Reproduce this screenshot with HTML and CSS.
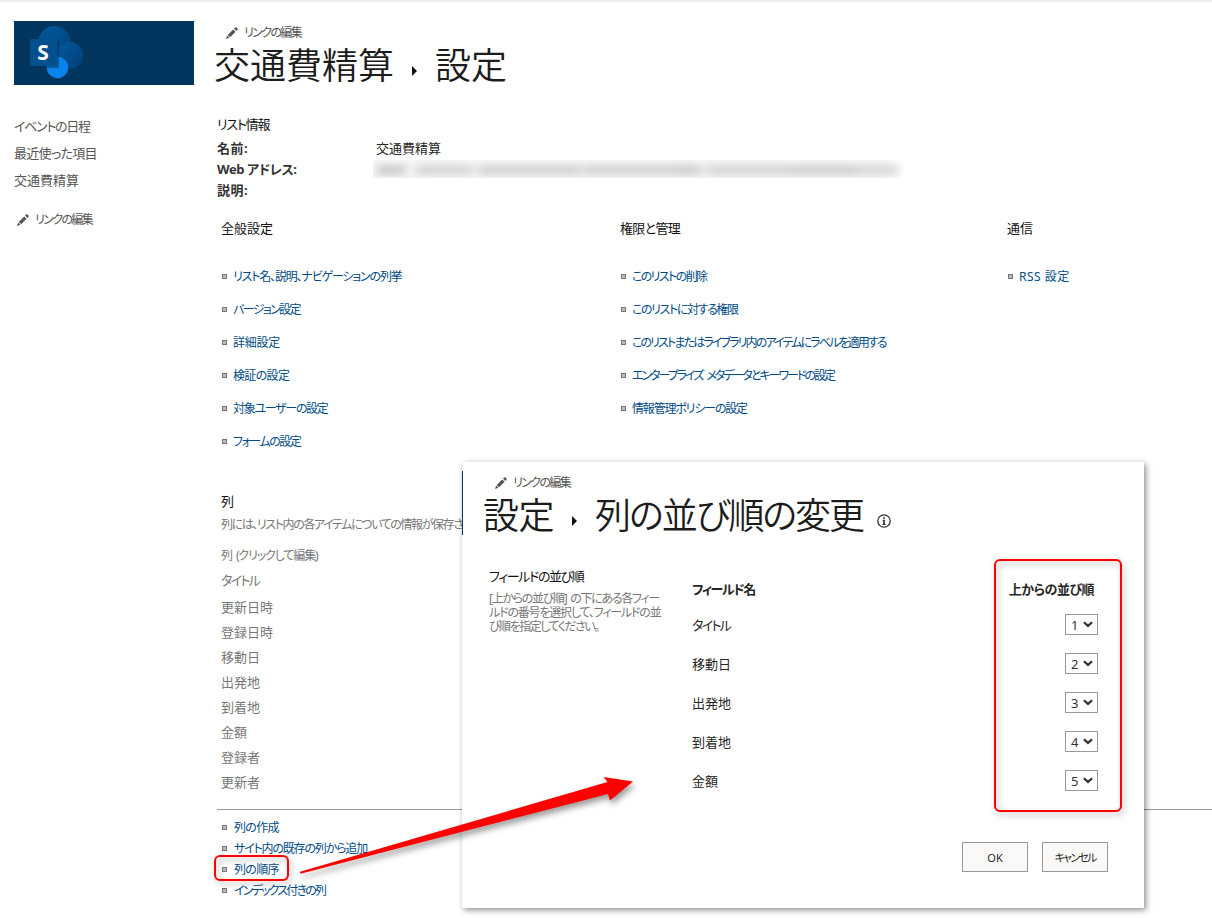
FILE: index.html
```html
<!DOCTYPE html>
<html lang="ja">
<head>
<meta charset="utf-8">
<title>交通費精算 - 設定</title>
<link rel="stylesheet" href="styles.css">
</head>
<body>
<svg class="defs" width="0" height="0"><defs>
<symbol id="pencil" viewBox="0 0 12 12"><path d="M0 12L1.2 8.6 3.4 10.8ZM1.7 7.9L7.2 2.4 9.6 4.8 4.1 10.3ZM8 1.6L9.2.4Q9.9-.1 10.6.6L11.4 1.4Q12.1 2.1 11.6 2.8L10.4 4Z" fill="#555"/></symbol>
<symbol id="chev" viewBox="0 0 10 7"><path d="M.9 1.2L5 4.9 9.1 1.2" fill="none" stroke="#333" stroke-width="2.2"/></symbol>
</defs></svg>
<div class="topbar"></div>
<div class="page">
<aside class="side">
<svg class="logo" width="180" height="64" viewBox="0 0 180 64">
<defs><linearGradient id="g1" x1="0" y1="0" x2="1" y2="1"><stop offset="0" stop-color="#005a9e"/><stop offset="1" stop-color="#003f77"/></linearGradient></defs>
<rect width="180" height="64" fill="#03365f"/>
<circle cx="40.5" cy="21" r="16" fill="url(#g1)"/><circle cx="55.5" cy="34.5" r="13.5" fill="url(#g1)"/>
<circle cx="43.5" cy="46.5" r="10.7" fill="#0a84ec"/><rect x="18" y="20" width="27" height="27" rx="1.5" fill="#002b50" opacity=".45"/>
<rect x="16" y="18" width="27" height="27" rx="1.5" fill="#03508f"/><text x="29" y="38.5" text-anchor="middle" class="logo-s">S</text></svg>
<nav class="quick"><a class="t13">イベントの日程</a><a class="t7">最近使った項目</a><a>交通費精算</a></nav>
<div class="edit edit-side"><svg width="12" height="12"><use href="#pencil"/></svg><span class="t16">リンクの編集</span></div>
</aside>
<main class="main">
<div class="edit edit-top"><svg width="12" height="12"><use href="#pencil"/></svg><span class="t16">リンクの編集</span></div>
<h1 class="title"><span>交通費精算</span><i class="tri"></i><span>設定</span></h1>
<section class="info"><h2 class="t12">リスト情報</h2>
<dl><dt class="w5">名前:</dt><dd>交通費精算</dd><dt class="t3">Web アドレス:</dt><dd><div class="masked"><i></i></div></dd><dt class="w5">説明:</dt><dd></dd></dl></section>
<section class="groups">
<div><h3>全般設定</h3><ul><li><a class="t12">リスト名、説明、ナビゲーションの列挙</a></li><li><a class="t16">バージョン設定</a></li><li><a class="t2">詳細設定</a></li><li><a class="t6">検証の設定</a></li><li><a class="t13">対象ユーザーの設定</a></li><li><a class="t15">フォームの設定</a></li></ul></div>
<div><h3 class="t6">権限と管理</h3><ul><li><a class="t16">このリストの削除</a></li><li><a class="t14">このリストに対する権限</a></li><li><a class="t19">このリストまたはライブラリ内のアイテムにラベルを適用する</a></li><li><a class="t20">エンタープライズ メタデータとキーワードの設定</a></li><li><a class="t12">情報管理ポリシーの設定</a></li></ul></div>
<div class="g-comm"><h3>通信</h3><ul><li><a class="w5">RSS 設定</a></li></ul></div>
</section>
<section class="columns"><h3>列</h3><p class="desc t14">列には、リスト内の各アイテムについての情報が保存さ</p><p class="hint t11">列 (クリックして編集)</p><p class="first t17">タイトル</p>
<ul class="names"><li>更新日時</li><li>登録日時</li><li>移動日</li><li>出発地</li><li>到着地</li><li>金額</li><li>登録者</li><li>更新者</li></ul></section>
<ul class="actions"><li><a class="t7">列の作成</a></li><li><a class="t12">サイト内の既存の列から追加</a></li><li><a class="t7">列の順序</a></li><li><a class="t18">インデックス付きの列</a></li></ul>
</main>
</div>
<div class="dialog">
<div class="strip"></div>
<div class="edit edit-dlg"><svg width="12" height="12"><use href="#pencil"/></svg><span class="t16">リンクの編集</span></div>
<h1 class="title title-dlg"><span class="t5">設定</span><i class="tri"></i><span class="t20">列の並び順の変更</span><svg class="inf" width="14" height="14" viewBox="0 0 14 14"><circle cx="7" cy="7" r="6.2" fill="none" stroke="#333" stroke-width="1.3"/><path d="M6.1 3.2h1.9v1.5H6.1zM5.6 5.7h2.3v4.3h.7v1H5.5V10h.7V6.7h-.6z" fill="#333"/></svg></h1>
<div class="order">
<div class="help"><h3 class="t14">フィールドの並び順</h3><p class="t13">[上からの並び順] の下にある各フィー</p><p class="t12">ルドの番号を選択して、フィールドの並</p><p class="t15">び順を指定してください。</p></div>
<div class="fields">
<div class="row head"><b class="t14">フィールド名</b><b class="t5">上からの並び順</b></div>
<div class="row"><span class="t17">タイトル</span><span class="sel">1<svg width="10" height="7"><use href="#chev"/></svg></span></div>
<div class="row"><span>移動日</span><span class="sel">2<svg width="10" height="7"><use href="#chev"/></svg></span></div>
<div class="row"><span>出発地</span><span class="sel">3<svg width="10" height="7"><use href="#chev"/></svg></span></div>
<div class="row"><span>到着地</span><span class="sel">4<svg width="10" height="7"><use href="#chev"/></svg></span></div>
<div class="row"><span>金額</span><span class="sel">5<svg width="10" height="7"><use href="#chev"/></svg></span></div>
</div></div>
<div class="buttons"><button>OK</button><button class="t18">キャンセル</button></div>
</div>
<div class="mark mark-order"></div>
<div class="mark mark-link"></div>
<svg class="arrow" width="1212" height="918" viewBox="0 0 1212 918"><path d="M300 871.8L607.5 782 603.5 777 633 781.5 610 800.5 608 794 301.500 873.600Q300 874 300 871.800Z" fill="#f00"/></svg>
</body>
</html>
```
FILE: styles.css
```css
body{margin:0;position:relative;width:1212px;height:918px;overflow:hidden;background:#fff;font:13px/20px "Noto Sans","Noto Sans CJK JP",sans-serif;font-feature-settings:"palt";color:#262626}
h1,h2,h3,p,ul,dl,dd{margin:0;padding:0;font-weight:400;font-size:13px;list-style:none}
h2,h3{color:#111}
a,p,span,b,h1,h2,h3,li,dt,button{white-space:nowrap}
.defs{position:absolute}
.topbar{height:2px;background:#eee}
.page{display:flex}

.w5{letter-spacing:.5px}
.t2{letter-spacing:-.25px}
.t3{letter-spacing:-.4px}
.t5{letter-spacing:-.5px}
.t6{letter-spacing:-.65px}
.t7{letter-spacing:-.7px}
.t11{letter-spacing:-1.12px;word-spacing:2px}
.t12{letter-spacing:-1.18px}
.t13{letter-spacing:-1.3px;word-spacing:2px}
.t14{letter-spacing:-1.4px}
.t15{letter-spacing:-1.5px}
.t16{letter-spacing:-1.62px}
.t17{letter-spacing:-1.74px}
.t18{letter-spacing:-1.8px}
.t19{letter-spacing:-1.88px}
.t20{letter-spacing:-2.02px;word-spacing:3px}

.side{width:180px;padding:19px 21px 0 14px;flex:none;color:#555}
.logo{display:block}
.logo-s{fill:#fff;font-weight:700;font-size:21px}
.quick{display:flex;flex-direction:column;padding-top:28px}
.quick a{height:27px;line-height:27px}
.edit{display:flex;align-items:center;gap:6px;height:16px;font-size:12px;color:#555}
.edit-side{padding:18px 0 0 3px}
.edit-top{padding:23px 0 0 11px}

.main{flex:1}
.title{display:flex;align-items:center;height:50px;font-size:36px;line-height:50px;font-weight:350;color:#1c1c1c;margin-left:-1px}
.tri{width:0;height:0;border:5px solid transparent;border-left:5px solid #111;border-right:0;margin:10px 18px 0 18px}
.info{padding:23px 0 0 2px}
.info dl{display:grid;grid-template-columns:159px 1fr;grid-auto-rows:21px;line-height:21px;padding-top:4px}
.info dt{font-weight:700;color:#333}
.masked{width:531px;height:18px;margin:1px 0 0 -3px;background:linear-gradient(90deg,#f7f7f7 95%,#fff);overflow:hidden}
.masked i{display:block;width:521px;height:8px;margin:6px 4px;filter:blur(4px);background:linear-gradient(90deg,#c0c0c0 0 28px,#eee 28px 40px,#ccc 40px 92px,#e0e0e0 92px 104px,#c8c8c8 104px 200px,#d4d4d4 200px 210px,#c8c8c8 210px 300px,#c4c4c4 300px 322px,#e2e2e2 322px 332px,#ccc 332px 414px,#c6c6c6 414px 480px,#d0d0d0 480px)}
.groups{display:grid;grid-template-columns:399px 387px 1fr;padding:17px 0 0 6px}
.groups ul{padding-top:22px}
.groups li{display:flex;align-items:center;height:33px}
.groups a,.actions a{font-size:12px;color:#004b87}
.groups li::before,.actions li::before{content:"";box-sizing:border-box;width:5px;height:5px;border:1px solid #777;background:#bbb;margin:0 6px 0 1px}
.columns{padding:33px 0 0 6px;color:#777}
.desc,.hint{font-size:12px}
.desc{padding-top:4px}
.hint{padding-top:11px}
.first{padding-top:4px}
.names{padding-top:5px}
.names li{height:25px;line-height:25px}
.actions{margin:14px 0 0 2px;border-top:1px solid #999;padding:7px 0 0 4px}
.actions li{display:flex;align-items:center;height:21px}
.actions li::before{margin-right:7px}

.dialog{position:absolute;left:462px;top:462px;width:682px;height:446px;background:#fff;box-shadow:2px 2px 6px rgba(0,0,0,.45)}
.strip{position:absolute;left:0;top:9px;width:1px;height:64px;background:#03365f}
.edit-dlg{padding:13px 0 0 33px}
.title-dlg{padding-left:22px}
.inf{margin:10px 0 0 14px}
.order{display:flex;padding:25px 46px 0 27px}
.help{width:203px;flex:none}
.help h3{margin-bottom:6px}
.help p{font-size:12px;line-height:14px;color:#777}
.fields{flex:1;padding-top:13px}
.row{display:flex;justify-content:space-between;align-items:center;height:39px}
.row.head{height:20px;margin-bottom:6px}
.head b:last-child{margin-right:4px}
.sel{box-sizing:border-box;display:flex;align-items:center;justify-content:space-between;width:33px;height:21px;border:1px solid #999;padding:0 4px 0 5px;color:#333}
.buttons{display:flex;justify-content:flex-end;gap:14px;padding:42px 36px 0 0}
.buttons button{width:66px;height:30px;padding:0;border:1px solid #999;background:#faf9f8;font-family:inherit;font-size:11px;font-feature-settings:inherit;color:#262626}

.mark{position:absolute;box-sizing:border-box;border:2px solid #f00;border-radius:6px;filter:drop-shadow(2px 3px 3px rgba(0,0,0,.35))}
.mark-order{left:994px;top:559px;width:128px;height:253px}
.mark-link{left:214px;top:855px;width:75px;height:26px}
.arrow{position:absolute;left:0;top:0;filter:drop-shadow(2px 4px 3px rgba(0,0,0,.4));pointer-events:none}
```
